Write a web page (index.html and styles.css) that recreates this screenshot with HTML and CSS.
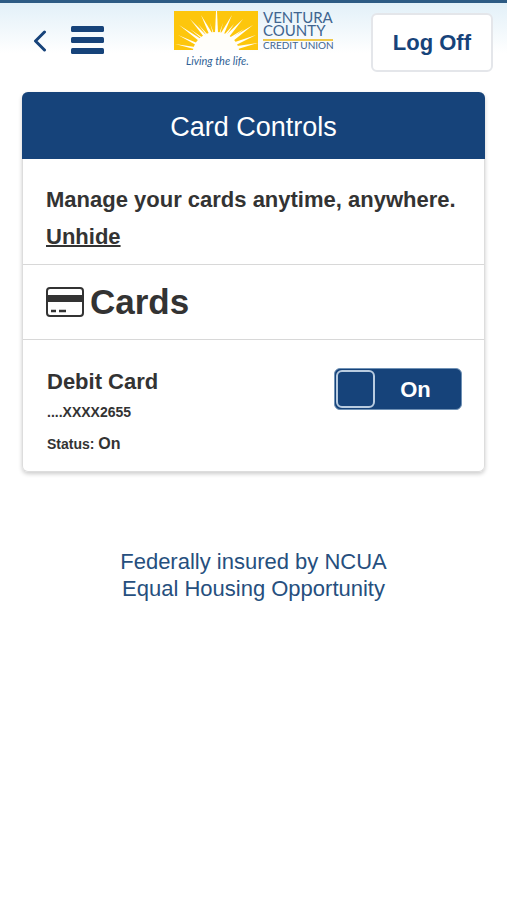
FILE: index.html
```
<!DOCTYPE html>
<html lang="en">
<head>
<meta charset="utf-8">
<meta name="viewport" content="width=device-width, initial-scale=1">
<title>Card Controls</title>
<link rel="stylesheet" href="styles.css">
</head>
<body>
<header class="topbar">
  <nav class="nav">
    <button class="icon-button" type="button" aria-label="Back">
      <svg width="14" height="24" viewBox="0 0 14 24" fill="none" stroke="currentColor" stroke-width="3" stroke-linecap="round" stroke-linejoin="round"><path d="M11.500 4L2.500 13L11.500 22"/></svg>
    </button>
    <button class="icon-button" type="button" aria-label="Menu">
      <svg width="33" height="28" viewBox="0 0 33 28" fill="currentColor"><rect width="33" height="6" rx="1.500"/><rect y="11" width="33" height="6" rx="1.500"/><rect y="22" width="33" height="6" rx="1.500"/></svg>
    </button>
  </nav>
  <a class="logo" href="#">
    <svg width="162" height="62" viewBox="0 0 162 62">
      <rect x="1" y="1" width="84" height="39" fill="#fdc60c"/>
      <g fill="#fffefa">
        <path d="M20 40C22 29 32 22 43 22S64 29 66 40Z"/>
        <path d="M42 23L43 1H44L45 23Z"/>
        <path d="M36 24L28 5L39 23Z"/><path d="M48 23L59 5L51 24Z"/>
        <path d="M31 27L17 9L33 25Z"/><path d="M53 25L70 9L56 27Z"/>
        <path d="M26 31L6 15L28 29Z"/><path d="M58 28L80 15L60 31Z"/>
        <path d="M23 35L5 25L24 33Z"/><path d="M62 32L83 25L63 35Z"/>
        <path d="M21 39L2 34L22 37Z"/><path d="M64 36L85 33L65 39Z"/>
        <path d="M40 24L37 13L41 24Z"/><path d="M46 24L50 13L47 24Z"/>
        <path d="M34 26L25 14L35 25Z"/><path d="M51 25L61 14L53 26Z"/>
        <path d="M29 29L17 19L30 28Z"/><path d="M56 28L71 19L58 29Z"/>
      </g>
      <path d="M90 30H160" stroke="#efc94a" stroke-width="2"/>
      <g class="logo-name">
        <text x="90" y="13">VENTURA</text>
        <text x="90" y="26">COUNTY</text>
      </g>
      <text class="logo-type" x="90" y="39">CREDIT UNION</text>
      <text class="logo-tagline" x="13" y="55">Living the life.</text>
    </svg>
  </a>
  <button class="logoff" type="button">Log Off</button>
</header>

<main class="panel">
  <h1 class="panel-title">Card Controls</h1>
  <section class="intro">
    <p>Manage your cards anytime, anywhere.</p>
    <a href="#">Unhide</a>
  </section>
  <h2 class="cards-heading">
    <svg width="38" height="30" viewBox="0 0 38 30" fill="none" stroke="currentColor" stroke-width="2"><rect x="1" y="1" width="36" height="28" rx="3"/><path d="M1 11.500H37" stroke-width="7"/><path d="M5 24H10M13 24H20" stroke-width="2.500"/></svg>
    Cards
  </h2>
  <section class="card-row">
    <div class="card-info">
      <h3>Debit Card</h3>
      <p class="small">....XXXX2655</p>
      <p class="small">Status: <span class="status">On</span></p>
    </div>
    <button class="switch" type="button" role="switch" aria-checked="true" aria-label="Debit Card On">
      <span class="knob"></span>
      <span class="switch-label">On</span>
    </button>
  </section>
</main>

<footer class="footer">
  <p>Federally insured by NCUA</p>
  <p>Equal Housing Opportunity</p>
</footer>
</body>
</html>
```
FILE: styles.css
```
* {
  box-sizing: border-box;
}

body {
  margin: 0;
  background: #fff;
  color: #333;
  font-family: "Liberation Sans", Arial, sans-serif;
  font-size: 22px;
  line-height: 27px;
}

h1, h2, h3, p {
  margin: 0;
}

button {
  font: inherit;
  cursor: pointer;
}

.topbar {
  display: grid;
  grid-template-columns: 1fr auto 1fr;
  align-items: start;
  padding: 7px 14px 20px;
  border-top: 3px solid #2d5b84;
  background: linear-gradient(#e2f0f8, #fff 50px);
}

.nav {
  display: flex;
  align-items: center;
  gap: 24px;
  padding: 16px 0 0 19px;
}

.icon-button {
  display: flex;
  padding: 0;
  border: 0;
  background: none;
  color: #16437a;
}

.logo {
  display: block;
}

.logo svg {
  display: block;
  overflow: visible;
}

.logo-name {
  fill: #3f6590;
  font: 15px Lato, sans-serif;
}

.logo-type {
  fill: #3f6590;
  font: 10px Lato, sans-serif;
}

.logo-tagline {
  fill: #2f5f96;
  font: italic 11px Lato, sans-serif;
}

.logoff {
  justify-self: end;
  margin-top: 3px;
  padding: 14px 20px;
  border: 2px solid #e4e6ea;
  border-radius: 6px;
  background: #fff;
  color: #16437a;
  font-weight: bold;
}

.panel {
  margin: 0 22px;
  border: 1px solid #ddd;
  border-top: 0;
  border-radius: 6px;
  box-shadow: 0 2px 4px rgba(0, 0, 0, 0.2);
}

.panel-title {
  margin: 0 -1px;
  padding: 22px 20px 18px;
  border-radius: 6px 6px 0 0;
  background: #16437a;
  color: #fff;
  font-size: 27px;
  font-weight: normal;
  text-align: center;
}

.intro {
  display: grid;
  gap: 10px;
  justify-items: start;
  padding: 27px 23px 14px;
  border-bottom: 1px solid #d8d8d8;
  font-weight: bold;
}

.intro a {
  color: inherit;
  text-decoration-thickness: 2px;
}

.cards-heading {
  display: flex;
  align-items: center;
  gap: 6px;
  padding: 17px 23px;
  border-bottom: 1px solid #d8d8d8;
  font-size: 35px;
  line-height: 40px;
}

.card-row {
  display: flex;
  justify-content: space-between;
  align-items: start;
  padding: 28px 22px 13px 24px;
}

.card-info h3 {
  font-size: 22px;
}

.small {
  margin-top: 4px;
  font-size: 14px;
  font-weight: bold;
}

.status {
  font-size: 16px;
}

.switch {
  display: flex;
  align-items: center;
  width: 128px;
  padding: 1px;
  border: 1px solid #6f91b5;
  border-radius: 6px;
  background: #16437a;
  color: #fff;
  font-weight: bold;
}

.knob {
  width: 39px;
  height: 38px;
  border: 2px solid #b9cce0;
  border-radius: 6px;
}

.switch-label {
  flex: 1;
  padding-right: 4px;
}

.footer {
  padding: 76px 22px;
  color: #264f7e;
  text-align: center;
}
```
